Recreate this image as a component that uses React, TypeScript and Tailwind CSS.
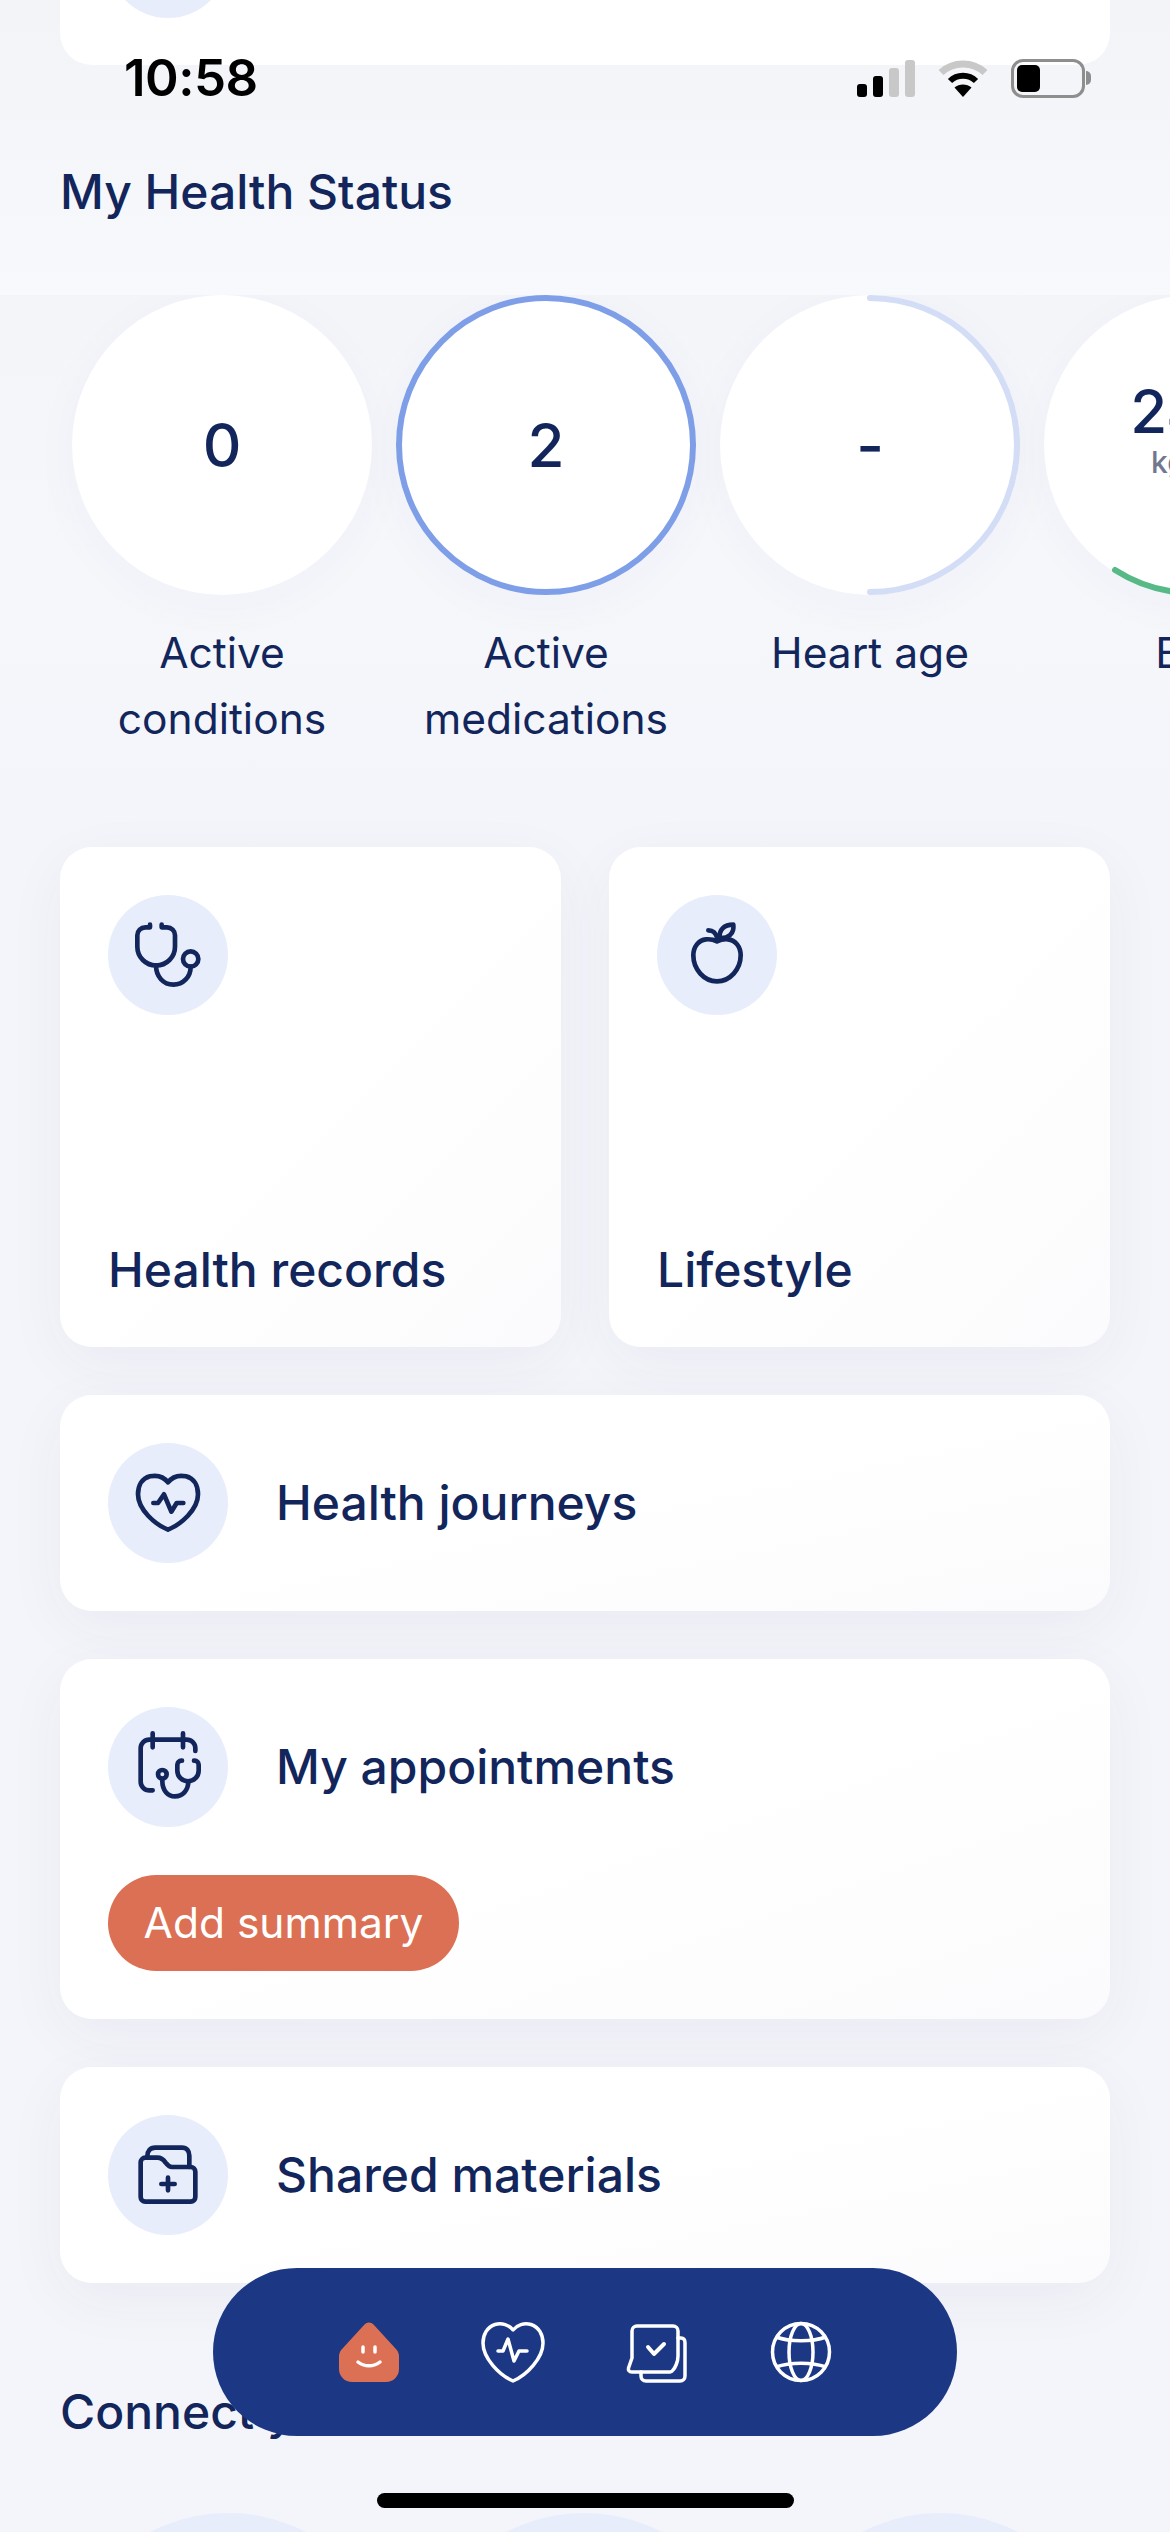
const navy = '#12265c';

const IconCircle = ({ viewBox, children }: { viewBox: string; children: React.ReactNode }) => (
  <div className="w-[120px] h-[120px] rounded-full bg-[#e7edfb] shrink-0">
    <svg
      viewBox={viewBox}
      className="w-[120px] h-[120px]"
      fill="none"
      stroke={navy}
      strokeWidth={14}
      strokeLinecap="round"
      strokeLinejoin="round"
    >
      {children}
    </svg>
  </div>
);

const Stethoscope = () => (
  <IconCircle viewBox="144 135 360 360">
    <path d="M270 224v8h-14a24 24 0 0 0-24 24v34a56.500 56.500 0 0 0 113 0v-34a24 24 0 0 0-24-24h-16v-8" />
    <path d="M288 346c0 34 22 58 52 58s52-24 52-54" />
    <circle cx="392" cy="327" r="23" />
  </IconCircle>
);

const Apple = () => (
  <IconCircle viewBox="141 135 360 360">
    <path d="M321 274c-12-6-22-7-33-6-22 2-38 22-38 48 0 42 32 78 71 78s71-36 71-78c0-26-16-46-38-48-11-1-21 0-33 6z" />
    <path d="M328 264c0-25 14-40 42-40 3 26-14 42-42 40z" />
    <path d="M295 241c12 0 22 4 27 25" />
  </IconCircle>
);

const HeartPulse = () => (
  <IconCircle viewBox="54 72 360 360">
    <path d="M234 190C220 172 200 168 180 172 156 178 144 200 144 226 144 272 195 316 234 332 273 316 324 272 324 226 324 200 312 178 288 172 268 168 248 172 234 190Z" />
    <path d="M190 252h14l18-26 22 52 16-26h20" />
  </IconCircle>
);

const CalendarSteth = () => (
  <IconCircle viewBox="54 54 360 360">
    <path d="M316 186v-8a26 26 0 0 0-26-26H178a26 26 0 0 0-26 26v100a26 26 0 0 0 26 26h10" />
    <path d="M188 133v42M279 133v42" />
    <path d="M276 215h-2a12 12 0 0 0-12 12v18a32 32 0 0 0 64 0v-18a12 12 0 0 0-12-12h-2" />
    <path d="M295 277c0 28-18 45-40 45s-38-18-38-46" />
    <circle cx="217" cy="256" r="13" />
  </IconCircle>
);

const FolderPlus = () => (
  <IconCircle viewBox="54 48 360 360">
    <path d="M152 190a14 14 0 0 1 14-14h36c12 0 18 5 24 14 6 8 10 14 20 14h56a14 14 0 0 1 14 14v76a14 14 0 0 1-14 14H166a14 14 0 0 1-14-14z" />
    <path d="M172 172c0-16 8-26 24-26h80c14 0 22 10 22 24v34" />
    <path d="M234 236v38M214 255h40" />
  </IconCircle>
);

const StatusBar = () => (
  <div className="absolute top-[56px] left-0 w-full h-[44px] flex items-center justify-between pl-[124px] pr-[79px]">
    <span className="text-[51px] leading-[44px] font-semibold text-black tracking-[-0.5px]">10:58</span>
    <div className="flex items-center">
      <div className="flex items-end gap-[6px] h-[37px]">
        <div className="w-[10px] h-[13px] rounded-[3px] bg-black" />
        <div className="w-[10px] h-[21px] rounded-[3px] bg-black" />
        <div className="w-[10px] h-[29px] rounded-[3px] bg-[#c8c8c8]" />
        <div className="w-[10px] h-[37px] rounded-[3px] bg-[#c8c8c8]" />
      </div>
      <svg viewBox="0 0 50 37" className="w-[50px] h-[37px] ml-[23px]" fill="none">
        <path d="M3 12.500C15 1 35 1 47 12.500" stroke="#c8c8c8" strokeWidth={7} />
        <path d="M12 21C19 14 31 14 38 21" stroke="#000" strokeWidth={6} />
        <path d="M25 37L16.500 27.500C21 23.500 29 23.500 33.500 27.500Z" fill="#000" />
      </svg>
      <div className="w-[74px] h-[39px] ml-[23px] rounded-[12px] border-[3px] border-[#8e8e8e] p-[3px]">
        <div className="w-[23px] h-full rounded-[5px] bg-black" />
      </div>
      <div className="w-[5px] h-[14px] rounded-r-full bg-[#8e8e8e] ml-[1px]" />
    </div>
  </div>
);

const stats = [
  { value: '0', label: ['Active', 'conditions'], ring: 'none' },
  { value: '2', label: ['Active', 'medications'], ring: 'full' },
  { value: '-', label: ['Heart age'], ring: 'half' },
  { value: '24.3', unit: 'kg/m²', label: ['BMI'], ring: 'green' },
];

const StatCircle = ({ stat }: { stat: (typeof stats)[number] }) => (
  <div className="w-[300px] shrink-0 flex flex-col items-center">
    <div className="relative w-[300px] h-[300px] rounded-full bg-white shadow-[0_10px_50px_rgba(40,60,130,0.03)] flex flex-col items-center justify-center">
      <span className="text-[60px] leading-[60px] font-medium text-[#12265c]">{stat.value}</span>
      {stat.unit && <span className="text-[30px] leading-[34px] font-medium text-[#70778f] mt-[4px] mb-[30px]">{stat.unit}</span>}
      {stat.ring !== 'none' && (
        <svg viewBox="0 0 300 300" className="absolute inset-0 w-[300px] h-[300px]" fill="none" strokeWidth={6} strokeLinecap="round">
          {stat.ring === 'full' && <circle cx="150" cy="150" r="147" stroke="#7e9fe8" />}
          {stat.ring === 'half' && <path d="M150 3a147 147 0 0 1 0 294" stroke="#d3ddf6" />}
          {stat.ring === 'green' && <path d="M71 275a147 147 0 0 0 158 0" stroke="#57b986" />}
        </svg>
      )}
    </div>
    <div className="mt-[25px] text-[42.500px] leading-[66px] text-[#12265c] text-center whitespace-nowrap">
      {stat.label.map((line) => (
        <div key={line}>{line}</div>
      ))}
    </div>
  </div>
);

const cardClass = 'rounded-[32px] bg-gradient-to-br from-white via-white to-[#fbfbfd] shadow-[0_16px_60px_rgba(40,55,120,0.05)]';
const titleClass = 'text-[48px] leading-[56px] text-[#12265c] font-[450] whitespace-nowrap';

const RowCard = ({ title, icon }: { title: string; icon: React.ReactNode }) => (
  <div className={`${cardClass} p-[48px] flex items-center gap-[48px]`}>
    {icon}
    <span className={titleClass}>{title}</span>
  </div>
);

const BottomNav = () => (
  <div className="absolute left-[213px] top-[2268px] w-[744px] h-[168px] rounded-[84px] bg-[#1c3885] flex items-center justify-center gap-[80px]">
    <svg viewBox="0 0 64 64" className="w-[64px] h-[64px]" fill="none">
      <path d="M27.500 4.500a6 6 0 0 1 9 0L58 28a12 12 0 0 1 4 8v13a13 13 0 0 1-13 13H15A13 13 0 0 1 2 49V36a12 12 0 0 1 4-8z" fill="#dc7054" />
      <path d="M26 27v5M38 27v5M21 42c6 5 16 5 22 0" stroke="#fff" strokeWidth={3.5} strokeLinecap="round" />
    </svg>
    <svg viewBox="0 0 64 64" className="w-[64px] h-[64px]" fill="none" stroke="#fff" strokeWidth={3.5} strokeLinecap="round" strokeLinejoin="round">
      <path d="M32 10C28 5 21 2.500 14 4.500 6 7 2 15 2 23c0 15 16 32 30 38 14-6 30-23 30-38 0-8-4-16-12-18.500C43 2.500 36 5 32 10z" />
      <path d="M17 31h5l5-12 6 22 5-10h8" />
    </svg>
    <svg viewBox="0 0 64 64" className="w-[64px] h-[64px]" fill="none" stroke="#fff" strokeWidth={3.5} strokeLinecap="round" strokeLinejoin="round">
      <path d="M7 11a5 5 0 0 1 5-5h36a5 5 0 0 1 5 5v25c0 6-3 12-5 14a4 4 0 0 1-3 2H7c-3 0-4-2-3.500-4L7 38z" />
      <path d="M53 18h3c3 0 4 2 4 5v33c0 3-2 5-5 5H21c-3 0-5-2-5-5v-4" />
      <path d="M23 27l6 7 10-10" strokeWidth={4} />
    </svg>
    <svg viewBox="0 0 64 64" className="w-[64px] h-[64px]" fill="none" stroke="#fff" strokeWidth={3.5}>
      <circle cx="32" cy="32" r="28.500" />
      <ellipse cx="32" cy="32" rx="12" ry="28.500" />
      <path d="M7 17c14 5 36 5 50 0M7 47c14-5 36-5 50 0" />
    </svg>
  </div>
);

export default function App() {
  return (
    <div className="relative w-[1170px] h-[2532px] overflow-hidden bg-[#f4f5fa] font-['Inter',sans-serif]">
      <div className="h-[295px] bg-gradient-to-b from-[#f3f4f8] via-[#f5f6fa] to-[#f8f9fc]">
        <div className="mx-[60px] h-[65px] rounded-b-[32px] bg-white overflow-hidden pl-[48px]">
          <div className="w-[120px] h-[120px] -mt-[102px] rounded-full bg-[#e7edfb]" />
        </div>
        <h2 className={`${titleClass} pl-[60px] pt-[99px]`}>My Health Status</h2>
      </div>

      <div className="h-[552px] overflow-hidden bg-gradient-to-b from-[#f3f5f9] via-[#f6f7fb] to-[#f4f5fa] pl-[72px] flex gap-[24px]">
        {stats.map((stat) => (
          <StatCircle key={stat.value} stat={stat} />
        ))}
      </div>

      <div className="px-[60px] flex flex-col gap-[48px]">
        <div className="grid grid-cols-2 gap-[48px]">
          <div className={`${cardClass} h-[500px] p-[48px] pb-[49px] flex flex-col justify-between`}>
            <Stethoscope />
            <span className={titleClass}>Health records</span>
          </div>
          <div className={`${cardClass} h-[500px] p-[48px] pb-[49px] flex flex-col justify-between`}>
            <Apple />
            <span className={titleClass}>Lifestyle</span>
          </div>
        </div>

        <RowCard title="Health journeys" icon={<HeartPulse />} />

        <div className={`${cardClass} p-[48px]`}>
          <div className="flex items-center gap-[48px]">
            <CalendarSteth />
            <span className={titleClass}>My appointments</span>
          </div>
          <button className="mt-[48px] h-[96px] w-[351px] rounded-[48px] bg-[#dc7054] text-white text-[42.500px] font-normal block">
            Add summary
          </button>
        </div>

        <RowCard title="Shared materials" icon={<FolderPlus />} />
      </div>

      <h2 className={`${titleClass} pl-[60px] mt-[101px]`}>Connect your devices</h2>

      <div className="flex gap-[16px] pl-[58px] mt-[73px]">
        <div className="w-[340px] h-[340px] rounded-full bg-[#e7edfb] shrink-0" />
        <div className="w-[340px] h-[340px] rounded-full bg-[#e7edfb] shrink-0" />
        <div className="w-[340px] h-[340px] rounded-full bg-[#e7edfb] shrink-0" />
      </div>

      <StatusBar />
      <BottomNav />
      <div className="absolute left-[377px] top-[2493px] w-[417px] h-[15px] rounded-full bg-black" />
    </div>
  );
}
